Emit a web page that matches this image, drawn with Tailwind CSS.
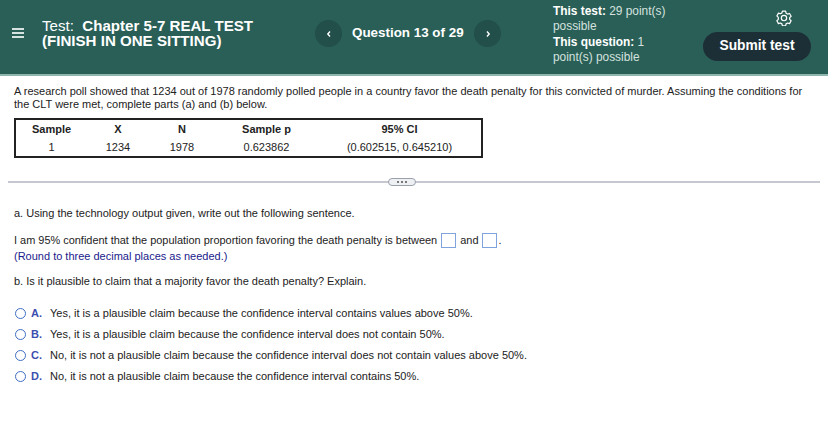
<!DOCTYPE html>
<html lang="en">
<head>
  <meta charset="UTF-8" />
  <meta name="viewport" content="width=device-width, initial-scale=1" />
  <title>Chapter 5-7 REAL TEST</title>
  <script src="https://cdn.jsdelivr.net/npm/@tailwindcss/browser@4"></script>
</head>
<body class="w-[828px] h-[443px] overflow-hidden bg-white font-['Liberation_Sans',Arial,sans-serif] text-[#222]">

  <!-- Top bar -->
  <header class="flex h-[76px] items-center bg-[#2a5f57] border-b-2 border-[#8fb5ae] text-white">
    <button class="ml-[12px] -mt-[8px] flex w-[12px] shrink-0 flex-col gap-[2px]">
      <span class="h-[2px] bg-[#d5e2df]"></span>
      <span class="h-[2px] bg-[#d5e2df]"></span>
      <span class="h-[2px] bg-[#d5e2df]"></span>
    </button>
    <div class="ml-[18px] w-[273px] shrink-0 -mt-[9px] text-[15.1px] leading-[15px] font-bold">
      <span class="font-normal">Test:</span>&nbsp; Chapter 5-7 REAL TEST<br />(FINISH IN ONE SITTING)
    </div>
    <button class="-mt-[7px] flex h-[27px] w-[27px] shrink-0 items-center justify-center rounded-full bg-[#224f49]">
      <svg width="8" height="8" viewBox="0 0 8 8" fill="none" stroke="#fff" stroke-width="1.4"><path d="M5 1.5 2.8 4 5 6.500" /></svg>
    </button>
    <div class="ml-[10px] -mt-[7px] w-[122px] shrink-0 text-[13.4px] font-bold">Question 13 of 29</div>
    <button class="-mt-[7px] flex h-[27px] w-[27px] shrink-0 items-center justify-center rounded-full bg-[#224f49]">
      <svg width="8" height="8" viewBox="0 0 8 8" fill="none" stroke="#fff" stroke-width="1.4"><path d="M3 1.500 5.200 4 3 6.500" /></svg>
    </button>
    <div class="ml-[52px] w-[125px] shrink-0 -mt-[5px] text-[11.9px] leading-[15.2px] text-[#d5e2df]">
      <b class="text-white">This test:</b> 29 point(s) possible<br />
      <b class="text-white">This question:</b> 1 point(s) possible
    </div>
    <div class="ml-[25px] flex w-[108px] shrink-0 flex-col items-end gap-[6px] -mt-[3px]">
      <svg class="mr-[19px]" width="16" height="16" viewBox="0 0 24 24" fill="none" stroke="#fff" stroke-width="1.8" stroke-linejoin="round"><path d="M9.600 1.800h4.800l.7 3 2.300 1.300 2.900-.9 2.400 4.200-2.200 2.100v2.600l2.200 2.100-2.400 4.200-2.900-.9-2.300 1.300-.7 3H9.600l-.7-3-2.300-1.300-2.900.9-2.400-4.200 2.200-2.100V11L1.300 8.900l2.400-4.200 2.900.9 2.300-1.300Z" /><circle cx="12" cy="12.100" r="4" /></svg>
      <button class="h-[29px] w-[108px] rounded-full bg-[#1d2f36] text-[13.8px] font-bold">Submit test</button>
    </div>
  </header>

  <!-- Question -->
  <main class="text-[11px] leading-[13px]">
    <p class="mx-[14px] mt-[9px] text-[#222]">A research poll showed that 1234 out of 1978 randomly polled people in a country favor the death penalty for this convicted of murder. Assuming the conditions for the CLT were met, complete parts (a) and (b) below.</p>

    <table class="ml-[14px] mt-[7px] w-[469px] table-fixed border-2 border-[#222] text-center">
      <tbody>
        <tr class="h-[20px] font-bold">
          <td class="w-[72px]">Sample</td>
          <td class="w-[62px]">X</td>
          <td class="w-[66px]">N</td>
          <td class="w-[103px]">Sample p</td>
          <td>95% CI</td>
        </tr>
        <tr class="h-[18px]">
          <td>1</td>
          <td>1234</td>
          <td>1978</td>
          <td>0.623862</td>
          <td>(0.602515, 0.645210)</td>
        </tr>
      </tbody>
    </table>

    <div class="relative ml-[8px] mt-[23px] h-[2px] w-[812px] bg-[#c5c8d0]">
      <div class="absolute left-[380px] -top-[3px] flex h-[8px] w-[28px] items-center justify-center gap-[2px] rounded-full border border-[#9ba0ab] bg-[#eef0f4]">
        <span class="h-[2px] w-[2px] bg-[#777]"></span>
        <span class="h-[2px] w-[2px] bg-[#777]"></span>
        <span class="h-[2px] w-[2px] bg-[#777]"></span>
      </div>
    </div>

    <p class="ml-[14px] mt-[24px]">a. Using the technology output given, write out the following sentence.</p>

    <div class="ml-[14px] mt-[13px] flex h-[15px] items-center text-[10.95px]">
      I am 95% confident that the population proportion favoring the death penalty is between
      <span class="ml-[4px] h-[15px] w-[15px] border border-[#7fa3dc]"></span>
      <span class="ml-[4px]">and</span>
      <span class="ml-[4px] h-[15px] w-[15px] border border-[#7fa3dc]"></span>
      <span class="ml-[1px]">.</span>
    </div>
    <p class="ml-[14px] mt-[2px] text-[#1a1a8c]">(Round to three decimal places as needed.)</p>

    <p class="ml-[14px] mt-[12px]">b. Is it plausible to claim that a majority favor the death penalty? Explain.</p>

    <ul class="ml-[15px] mt-[19px] flex flex-col gap-[8px]">
      <li class="flex h-[13px] items-center">
        <span class="h-[11px] w-[11px] rounded-full border border-[#3f6fc4]"></span>
        <b class="ml-[5px] w-[19px] text-[#3b4fb0]">A.</b>
        <span>Yes, it is a plausible claim because the confidence interval contains values above 50%.</span>
      </li>
      <li class="flex h-[13px] items-center">
        <span class="h-[11px] w-[11px] rounded-full border border-[#3f6fc4]"></span>
        <b class="ml-[5px] w-[19px] text-[#3b4fb0]">B.</b>
        <span>Yes, it is a plausible claim because the confidence interval does not contain 50%.</span>
      </li>
      <li class="flex h-[13px] items-center">
        <span class="h-[11px] w-[11px] rounded-full border border-[#3f6fc4]"></span>
        <b class="ml-[5px] w-[19px] text-[#3b4fb0]">C.</b>
        <span>No, it is not a plausible claim because the confidence interval does not contain values above 50%.</span>
      </li>
      <li class="flex h-[13px] items-center">
        <span class="h-[11px] w-[11px] rounded-full border border-[#3f6fc4]"></span>
        <b class="ml-[5px] w-[19px] text-[#3b4fb0]">D.</b>
        <span>No, it is not a plausible claim because the confidence interval contains 50%.</span>
      </li>
    </ul>
  </main>
</body>
</html>
